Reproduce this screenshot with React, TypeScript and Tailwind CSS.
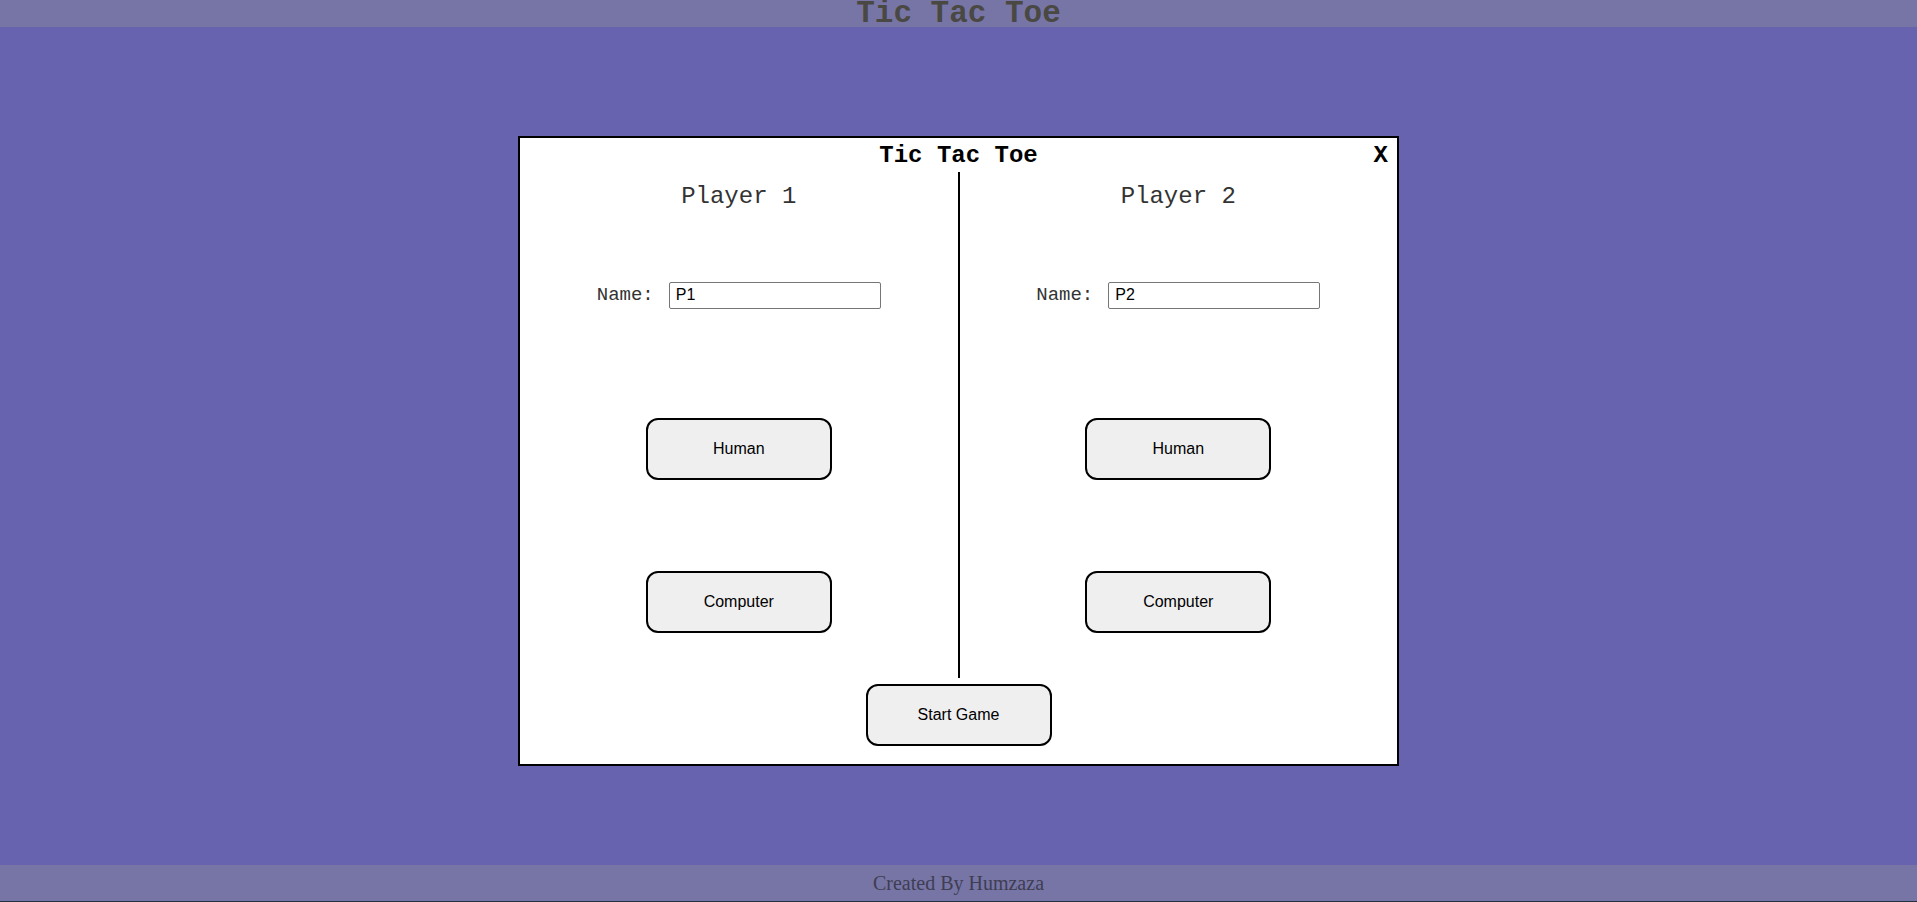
import { useState } from "react";

const mono = "font-['Liberation_Mono','Courier_New',monospace]";
const sans = "font-['Liberation_Sans',Arial,sans-serif]";

function ChoiceButton({ label }: { label: string }) {
  return (
    <button
      className={`w-[186px] h-[62px] rounded-[12px] border-2 border-black bg-[#efefef] text-[16px] text-black ${sans}`}
    >
      {label}
    </button>
  );
}

function PlayerColumn({ title, initial }: { title: string; initial: string }) {
  const [name, setName] = useState(initial);

  return (
    <div className="flex-1 flex flex-col items-center pt-[11px]">
      <h2 className={`text-[24px] leading-[27px] text-[#333] ${mono}`}>{title}</h2>

      <div className="mt-[71px] flex items-center gap-[15px]">
        <label className={`text-[19px] text-[#333] ${mono}`}>Name:</label>
        <input
          value={name}
          onChange={(e) => setName(e.target.value)}
          className={`w-[212px] h-[27px] border border-[#767676] rounded-[2px] pl-[6px] text-[16px] text-black bg-white outline-none ${sans}`}
        />
      </div>

      <div className="mt-[108px]">
        <ChoiceButton label="Human" />
      </div>
      <div className="mt-[91px]">
        <ChoiceButton label="Computer" />
      </div>
    </div>
  );
}

export default function App() {
  return (
    <div className="h-screen flex flex-col bg-[#6763ae] overflow-hidden">
      {/* header */}
      <header className="h-[27px] shrink-0 bg-[#7675a6] flex justify-center">
        <h1 className={`text-[31px] leading-[27px] font-bold text-[#4a4842] ${mono}`}>
          Tic Tac Toe
        </h1>
      </header>

      {/* main */}
      <main className="flex-1 flex justify-center pt-[109px]">
        <div className="relative w-[881px] h-[630px] bg-white border-2 border-black flex flex-col">
          <div className="h-[34px] pt-[4px] flex justify-center">
            <h2 className={`text-[24px] leading-[27px] font-bold text-black ${mono}`}>
              Tic Tac Toe
            </h2>
          </div>
          <button
            className={`absolute top-[4px] right-[9px] text-[24px] leading-[27px] font-bold text-black ${mono}`}
          >
            X
          </button>

          <div className="h-[506px] flex">
            <PlayerColumn title="Player 1" initial="P1" />
            <div className="w-[2px] bg-black" />
            <PlayerColumn title="Player 2" initial="P2" />
          </div>

          <div className="flex justify-center pt-[6px]">
            <ChoiceButton label="Start Game" />
          </div>
        </div>
      </main>

      {/* footer */}
      <footer className="h-[36px] shrink-0 bg-[#7675a6] flex items-center justify-center">
        <p className="text-[20px] text-[#3f3d52] font-['Liberation_Serif','Times_New_Roman',serif]">
          Created By Humzaza
        </p>
      </footer>
      <div className="h-[1px] shrink-0 bg-[#1f3340]" />
    </div>
  );
}
